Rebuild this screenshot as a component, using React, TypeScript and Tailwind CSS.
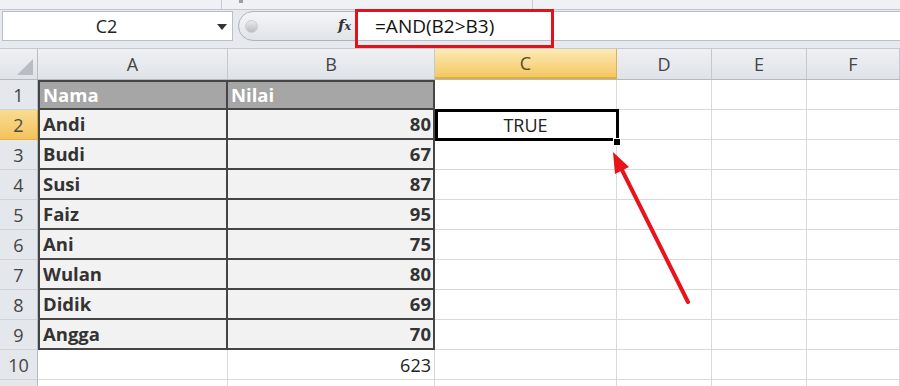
const cols = [
  { key: "A", w: "w-[190px]" },
  { key: "B", w: "w-[207px]" },
  { key: "C", w: "w-[182px]" },
  { key: "D", w: "w-[95px]" },
  { key: "E", w: "w-[95px]" },
  { key: "F", w: "w-[93px]" },
];

const data: [string, string][] = [
  ["Andi", "80"],
  ["Budi", "67"],
  ["Susi", "87"],
  ["Faiz", "95"],
  ["Ani", "75"],
  ["Wulan", "80"],
  ["Didik", "69"],
  ["Angga", "70"],
];

function RowHeader({ n, active }: { n: string; active?: boolean }) {
  return (
    <div
      className={
        active
          ? "w-[38px] shrink-0 flex items-center justify-center border-r border-b border-r-[#e0a93b] border-b-[#e3b04c] bg-gradient-to-b from-[#f9dc92] to-[#f3c35a] text-[#4a4a4a]"
          : "w-[38px] shrink-0 flex items-center justify-center border-r border-b border-r-[#b6bcc4] border-b-[#cfd3d9] bg-[#e4e7eb] text-[#444]"
      }
    >
      {n}
    </div>
  );
}

function Empty({ w }: { w: string }) {
  return <div className={`${w} shrink-0 border-r border-b border-[#d9d9d9]`} />;
}

export default function App() {
  return (
    <div className="relative w-[900px] h-[386px] overflow-hidden bg-white font-['Open_Sans',sans-serif] text-[18px] leading-none">
      {/* ribbon edge */}
      <div className="flex h-[10px] bg-[#eff1f4] border-b border-[#c3c8cf]">
        <div className="w-[222px] border-r border-[#c9cdd3]" />
        <div className="w-[311px] border-r border-[#c9cdd3] relative">
          <div className="absolute left-[17px] top-0 w-[4px] h-[3px] bg-[#9aa0a8]" />
        </div>
        <div className="flex-1" />
      </div>

      {/* formula bar */}
      <div className="flex h-[39px] items-start pt-[1px] bg-[#e6e9ed] border-b border-[#c4c9cf]">
        <div className="ml-[2px] w-[231px] h-[30px] bg-white border border-[#b9bfc7] relative flex items-center justify-center text-[#222]">
          <span className="-ml-[22px]">C2</span>
          <svg className="absolute right-[5px] top-[12px]" width="10" height="6" viewBox="0 0 10 6">
            <path d="M0 0 L10 0 L5 6 Z" fill="#333" />
          </svg>
        </div>
        <div className="ml-[5px] w-[118px] h-[30px] rounded-l-full border border-[#aeb4bc] bg-gradient-to-b from-[#f4f5f7] to-[#e1e4e8] flex items-center relative">
          <div className="ml-[6px] w-[13px] h-[13px] rounded-full bg-gradient-to-b from-[#e9eaec] to-[#b9bdc3] border border-[#c9ccd1]" />
          <span className="absolute right-[4px] top-[6px] font-['DejaVu_Serif',serif] italic font-bold text-[15px] text-[#333]">
            f<span className="text-[11px]">x</span>
          </span>
        </div>
        <div className="flex-1 h-[30px] bg-white border-t border-b border-[#b9bfc7] flex items-center pl-[19px] text-[19px] text-[#111]">
          =AND(B2&gt;B3)
        </div>
      </div>

      {/* red highlight around the formula */}
      <div className="absolute left-[355px] top-[9px] w-[199px] h-[39px] border-[3px] border-[#e0121b] z-20" />

      {/* sheet */}
      <div className="flex flex-col">
        {/* column headers */}
        <div className="flex h-[31px] border-b border-[#b3b9c1]">
          <div className="w-[38px] shrink-0 border-r border-[#b9bec5] bg-gradient-to-b from-[#eef0f3] to-[#dfe3e8] relative">
            <svg className="absolute right-[4px] bottom-[4px]" width="16" height="16" viewBox="0 0 16 16">
              <path d="M16 0 L16 16 L0 16 Z" fill="#b8bdc4" />
            </svg>
          </div>
          {cols.map((c) =>
            c.key === "C" ? (
              <div
                key={c.key}
                className={`${c.w} shrink-0 flex items-center justify-center border-r border-b-2 border-r-[#e0b050] border-b-[#e6ad3c] bg-gradient-to-b from-[#fceab5] to-[#f4c85f] text-[#5a4a2a]`}
              >
                {c.key}
              </div>
            ) : (
              <div
                key={c.key}
                className={`${c.w} shrink-0 flex items-center justify-center border-r border-[#c4c9cf] bg-gradient-to-b from-[#eef0f3] to-[#dfe3e8] text-[#444]`}
              >
                {c.key}
              </div>
            )
          )}
        </div>

        {/* row 1 */}
        <div className="flex h-[30px]">
          <RowHeader n="1" />
          <div className="w-[190px] shrink-0 bg-[#a6a6a6] border-2 border-[#454545] flex items-center pl-[3px] pt-[1px] font-bold text-white text-[18.5px]">
            Nama
          </div>
          <div className="w-[207px] shrink-0 bg-[#a6a6a6] border-t-2 border-r-2 border-b-2 border-[#454545] flex items-center pl-[3px] pt-[1px] font-bold text-white text-[18.5px]">
            Nilai
          </div>
          <Empty w="w-[182px]" />
          <Empty w="w-[95px]" />
          <Empty w="w-[95px]" />
          <Empty w="w-[93px]" />
        </div>

        {/* rows 2-9 */}
        {data.map(([name, val], i) => (
          <div key={name + i} className="flex h-[30px]">
            <RowHeader n={String(i + 2)} active={i === 0} />
            <div className="w-[190px] shrink-0 bg-[#f2f2f2] border-l-2 border-r-2 border-b-2 border-[#454545] flex items-center pl-[3px] pt-[1px] font-bold text-[#333] text-[18.5px]">
              {name}
            </div>
            <div className="w-[207px] shrink-0 bg-[#f2f2f2] border-r-2 border-b-2 border-[#454545] flex items-center justify-end pr-[2px] pt-[1px] font-bold text-[#333] text-[18.5px]">
              {val}
            </div>
            {i === 0 ? (
              <div className="w-[182px] shrink-0 border-r border-b border-[#d9d9d9] relative z-10 flex items-center justify-center text-[#222]">
                TRUE
                <div className="absolute -top-[1px] left-0 -right-[3px] -bottom-[2px] border-[3px] border-black" />
                <div className="absolute left-[178px] top-[28px] w-[8px] h-[8px] bg-black border border-white" />
              </div>
            ) : (
              <Empty w="w-[182px]" />
            )}
            <Empty w="w-[95px]" />
            <Empty w="w-[95px]" />
            <Empty w="w-[93px]" />
          </div>
        ))}

        {/* row 10 */}
        <div className="flex h-[30px]">
          <RowHeader n="10" />
          <Empty w="w-[190px]" />
          <div className="w-[207px] shrink-0 border-r border-b border-[#d9d9d9] flex items-center justify-end pr-[3px] text-[#222]">
            623
          </div>
          <Empty w="w-[182px]" />
          <Empty w="w-[95px]" />
          <Empty w="w-[95px]" />
          <Empty w="w-[93px]" />
        </div>

        {/* row 11, cut off by the window edge */}
        <div className="flex h-[30px]">
          <RowHeader n="" />
          <Empty w="w-[190px]" />
          <Empty w="w-[207px]" />
          <Empty w="w-[182px]" />
          <Empty w="w-[95px]" />
          <Empty w="w-[95px]" />
          <Empty w="w-[93px]" />
        </div>
      </div>

      {/* red arrow annotation */}
      <svg className="absolute inset-0 z-30 pointer-events-none" width="900" height="386" viewBox="0 0 900 386">
        <line x1="688" y1="302" x2="621" y2="168" stroke="#e8141b" strokeWidth="4" strokeLinecap="round" />
        <polygon points="613,152 629,167 615,174" fill="#e8141b" />
      </svg>
    </div>
  );
}
